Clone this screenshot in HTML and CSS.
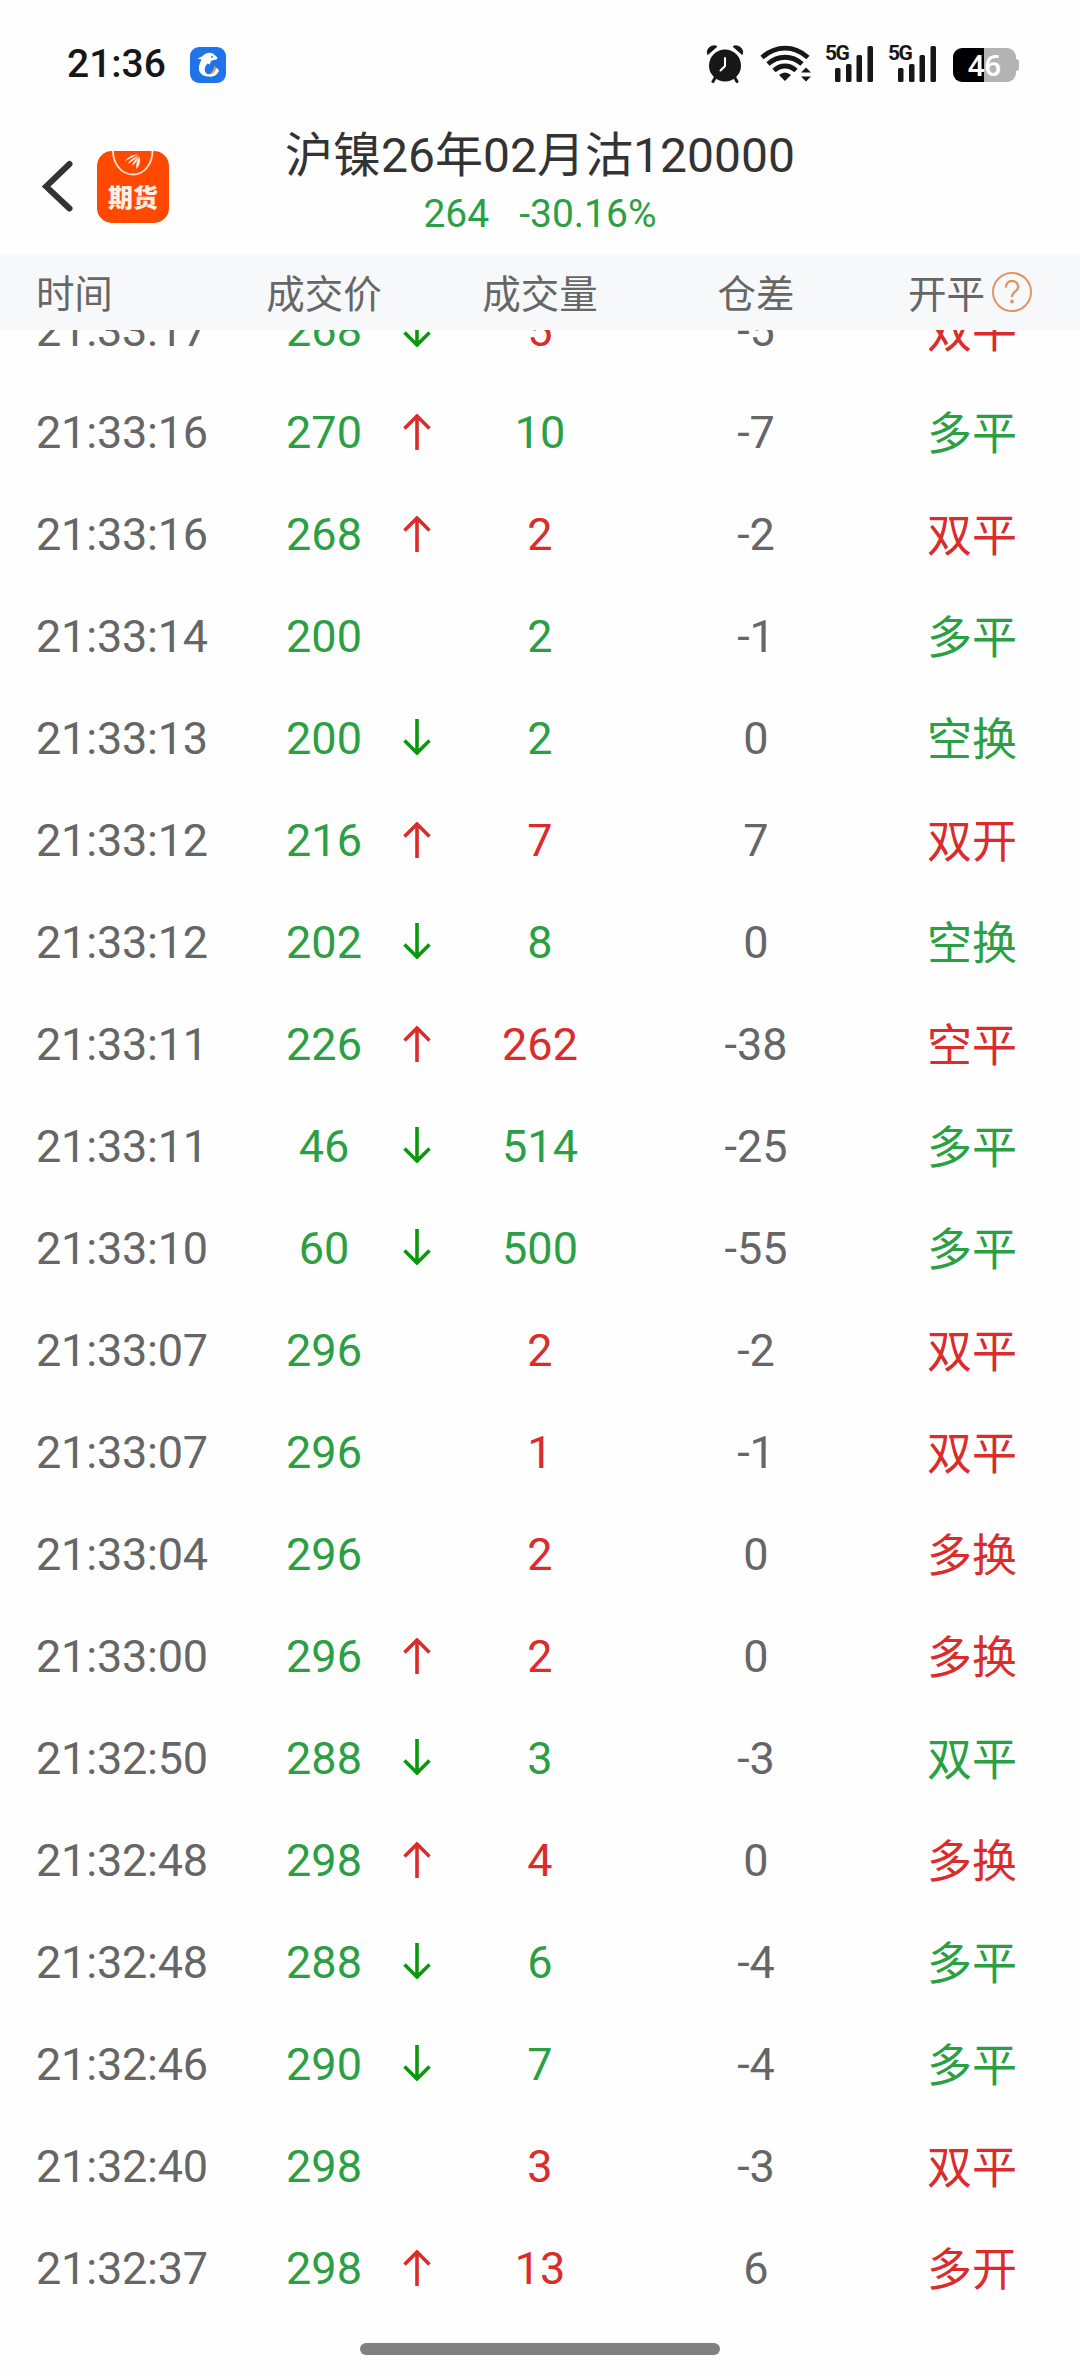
FILE: index.html
```html
<!DOCTYPE html>
<html lang="zh-CN">
<head>
  <meta charset="UTF-8">
  <meta name="viewport" content="width=device-width, initial-scale=1.0">
  <title>沪镍26年02月沽120000</title>
  <link rel="stylesheet" href="styles.css">
</head>
<body>
<div class="status-bar">
  <div class="status-left">
    <span class="clock">21:36</span>
    <svg class="app-badge" viewBox="0 0 36 36">
      <rect width="36" height="36" rx="9" fill="#1f74ea"/>
      <path d="M7.500 11.500 12 9.500C15 6 20 4.500 23.500 7L27.500 10.500 26.500 12.500 21.500 13.500 19.500 17.500 17.500 16.500C14 20 13.500 25 18 27.500L18.500 29.500C12 29.500 8 25 9 19.500 9.500 16 11 14 11.500 12.500Z" fill="#fff"/>
      <path d="M17 27.200C22 27.500 25.500 25 26 20.500L29 23C28 28 23 30.500 18.500 29.500Z" fill="#fff"/>
      <path d="M24 18.500C26.500 20 27 23.500 22.500 26.800L21 25.500C23.500 23.500 24.500 21.500 24 18.500Z" fill="#f7a14a"/>
      <circle cx="22" cy="10" r=".9" fill="#1f74ea"/>
    </svg>
  </div>
  <div class="status-right">
    <svg class="alarm" viewBox="0 0 38 38">
      <circle cx="19" cy="20.500" r="16" fill="#171717"/>
      <path d="M1.800 9.500C-.5 4 6 -1 11 1.500ZM36.200 9.500C38.500 4 32 -1 27 1.500Z" fill="#171717" stroke="#171717" stroke-linejoin="round"/>
      <path d="M9 33 7 36.500M29 33l2 3.500" stroke="#171717" stroke-width="3" stroke-linecap="round"/>
      <path d="M19 13v8l-4.500 4.500" fill="none" stroke="#fff" stroke-width="2" stroke-linecap="round"/>
    </svg>
    <svg class="wifi" viewBox="0 0 52 38">
      <g fill="none" stroke="#171717" stroke-width="4.800">
        <path d="M2 12.500C16 0 34 0 48 12.500"/>
        <path d="M8 19C18 10 32 10 42 19"/>
        <path d="M14 25.500C20.500 19.500 29.500 19.500 36 25.500"/>
      </g>
      <path d="M19 30Q25 25 31 30L25 36Z" fill="#171717"/>
      <path d="M41 27.500 46 22.500 51 27.500ZM41 31.500 46 36.500 51 31.500Z" fill="#171717"/>
    </svg>
    <div class="signal">
      <span>5G</span>
      <svg viewBox="0 0 39 37" fill="#171717">
        <rect x="0" y="23" width="5.500" height="14" rx="1.500"/>
        <rect x="11" y="19" width="5.500" height="18" rx="1.500"/>
        <rect x="21.500" y="10" width="5.500" height="27" rx="1.500"/>
        <rect x="32.500" y="1" width="5.500" height="36" rx="1.500"/>
      </svg>
    </div>
    <div class="signal">
      <span>5G</span>
      <svg viewBox="0 0 39 37" fill="#171717">
        <rect x="0" y="23" width="5.500" height="14" rx="1.500"/>
        <rect x="11" y="19" width="5.500" height="18" rx="1.500"/>
        <rect x="21.500" y="10" width="5.500" height="27" rx="1.500"/>
        <rect x="32.500" y="1" width="5.500" height="36" rx="1.500"/>
      </svg>
    </div>
    <div class="battery">
      <div class="battery-body">46</div>
      <div class="battery-tip"></div>
    </div>
  </div>
</div>

<header class="nav">
  <div class="nav-left">
    <svg class="back" viewBox="0 0 32 52">
      <path d="M27.500 4 4 26.500 27.500 48.500" fill="none" stroke="#333" stroke-width="6" stroke-linecap="round"/>
    </svg>
    <div class="logo">
      <svg class="logo-mark" viewBox="0 0 42 25">
        <path d="M1 0C1 12 9 23.500 21 23.500S40.500 12 40.500 0" fill="none" stroke="#ffe3d5" stroke-width="1.800"/>
        <path d="M13 10C16 6 21 3 26 3.500 22 5.500 18 7.500 13 10ZM15.500 13C18 9 22 6 27 4.500 23 8 20 11 15.500 13ZM20 15C21 11 24 7 27.500 5.500 25 9.500 24 12 20 15ZM24.500 18C23.500 13 25.500 8 28 6 28.500 11 27.500 15 24.500 18Z" fill="#ffeee6"/>
      </svg>
      <span>期货</span>
    </div>
  </div>
  <div class="nav-title">
    <h1>沪镍26年02月沽120000</h1>
    <p><span>264</span><span>-30.16%</span></p>
  </div>
</header>

<div class="row table-head">
  <div class="time">时间</div>
  <div>成交价</div>
  <div>成交量</div>
  <div>仓差</div>
  <div class="type-head">开平
    <svg class="help" viewBox="0 0 40 40">
      <circle cx="20" cy="20" r="19" fill="none" stroke="#e0946a" stroke-width="2"/>
      <path d="M13.800 15.500C13.800 11.500 16.500 9 20 9S26.200 11.500 26.200 15C26.200 19.500 20 19.500 20 25" fill="none" stroke="#e0946a" stroke-width="2.400"/>
      <circle cx="20" cy="29.500" r="1.900" fill="#e0946a"/>
    </svg>
  </div>
</div>

<div class="list-view">
  <div id="tick-list"></div>
</div>
<div class="home-bar"></div>

<script>
  // time, price, direction, volume, volume color, position change, type, type color
  const ticks = [
    ['21:33:17', 268, 'down', 5, 'red', -5, '双平', 'red'],
    ['21:33:16', 270, 'up', 10, 'green', -7, '多平', 'green'],
    ['21:33:16', 268, 'up', 2, 'red', -2, '双平', 'red'],
    ['21:33:14', 200, '', 2, 'green', -1, '多平', 'green'],
    ['21:33:13', 200, 'down', 2, 'green', 0, '空换', 'green'],
    ['21:33:12', 216, 'up', 7, 'red', 7, '双开', 'red'],
    ['21:33:12', 202, 'down', 8, 'green', 0, '空换', 'green'],
    ['21:33:11', 226, 'up', 262, 'red', -38, '空平', 'red'],
    ['21:33:11', 46, 'down', 514, 'green', -25, '多平', 'green'],
    ['21:33:10', 60, 'down', 500, 'green', -55, '多平', 'green'],
    ['21:33:07', 296, '', 2, 'red', -2, '双平', 'red'],
    ['21:33:07', 296, '', 1, 'red', -1, '双平', 'red'],
    ['21:33:04', 296, '', 2, 'red', 0, '多换', 'red'],
    ['21:33:00', 296, 'up', 2, 'red', 0, '多换', 'red'],
    ['21:32:50', 288, 'down', 3, 'green', -3, '双平', 'green'],
    ['21:32:48', 298, 'up', 4, 'red', 0, '多换', 'red'],
    ['21:32:48', 288, 'down', 6, 'green', -4, '多平', 'green'],
    ['21:32:46', 290, 'down', 7, 'green', -4, '多平', 'green'],
    ['21:32:40', 298, '', 3, 'red', -3, '双平', 'red'],
    ['21:32:37', 298, 'up', 13, 'red', 6, '多开', 'red']
  ];

  const arrows = {
    up: '<svg class="arrow red" viewBox="0 0 28 36"><path d="M14 36V2M1.500 14.500 14 2 26.500 14.500"/></svg>',
    down: '<svg class="arrow down" viewBox="0 0 28 36"><path d="M14 0V34M1.500 21.500 14 34 26.500 21.500"/></svg>',
    '': ''
  };

  document.getElementById('tick-list').innerHTML = ticks.map(t => `
    <div class="row">
      <div class="time">${t[0]}</div>
      <div class="price green"><span></span><span>${t[1]}</span><span class="dir">${arrows[t[2]]}</span></div>
      <div class="${t[4]}">${t[3]}</div>
      <div>${t[5]}</div>
      <div class="type ${t[7]}">${t[6]}</div>
    </div>
  `).join('');
</script>
</body>
</html>
```
FILE: styles.css
```css
* {
  box-sizing: border-box;
}

body {
  margin: 0;
  height: 2376px;
  display: flex;
  flex-direction: column;
  overflow: hidden;
  background: #fefefe;
  color: #666;
  font-family: Roboto, "Noto Sans CJK SC", sans-serif;
}

.status-bar {
  height: 128px;
  padding: 0 61px 0 67px;
  display: flex;
  justify-content: space-between;
}

.status-left {
  height: 128px;
  display: flex;
  gap: 24px;
}

.clock {
  height: 46px;
  margin-top: 41px;
  font-size: 39px;
  line-height: 46px;
  font-weight: 500;
  color: #171717;
}

.app-badge {
  width: 36px;
  height: 36px;
  margin-top: 47px;
}

.status-right {
  display: flex;
  align-items: flex-start;
  padding-top: 45px;
}

.alarm {
  width: 38px;
  height: 38px;
  margin-right: 16px;
}

.wifi {
  width: 52px;
  height: 38px;
  margin-right: 13px;
}

.signal {
  width: 63px;
  height: 37px;
  display: grid;
}

.signal span,
.signal svg {
  grid-area: 1 / 1;
}

.signal span {
  font-size: 21px;
  line-height: 17px;
  font-weight: 700;
  letter-spacing: -1.5px;
  color: #171717;
}

.signal svg {
  width: 39px;
  height: 37px;
  margin-left: 10px;
}

.battery {
  display: flex;
  align-items: center;
  margin: 3px 0 0 2px;
}

.battery-body {
  width: 63px;
  height: 34px;
  border-radius: 9px;
  background: linear-gradient(to right, #000 31px, #b3b3b3 31px);
  color: #fff;
  font-family: "Noto Sans", sans-serif;
  font-size: 29px;
  font-weight: 600;
  line-height: 34px;
  text-align: center;
}

.battery-tip {
  width: 3px;
  height: 12px;
  border-radius: 0 3px 3px 0;
  background: #b3b3b3;
}

.nav {
  height: 127px;
  display: grid;
  grid-template-columns: 216px 1fr 216px;
}

.nav-left {
  display: flex;
  align-items: flex-start;
  padding: 23px 0 0 42px;
}

.back {
  width: 32px;
  height: 52px;
  margin-top: 9px;
}

.logo {
  width: 72px;
  height: 72px;
  margin-left: 23px;
  border-radius: 15px;
  background: #ff4800;
  display: flex;
  flex-direction: column;
  align-items: center;
}

.logo-mark {
  width: 42px;
  height: 25px;
}

.logo span {
  margin-top: 9px;
  font-size: 25px;
  line-height: 28px;
  font-weight: 900;
  color: #ffeee6;
}

.nav-title {
  padding-top: 2px;
  text-align: center;
}

.nav-title h1 {
  margin: 0;
  font-size: 48px;
  line-height: 52px;
  font-weight: 400;
  color: #333;
  white-space: nowrap;
}

.nav-title p {
  margin: 8px 0 0;
  display: flex;
  justify-content: center;
  gap: 30px;
  font-size: 39px;
  line-height: 48px;
  color: #2b9f43;
}

.row {
  height: 102px;
  display: grid;
  grid-template-columns: repeat(5, 216px);
  align-items: center;
  font-size: 45px;
  line-height: 60px;
  text-align: center;
}

.row > div {
  padding-top: 2px;
}

.row .time {
  padding-left: 36px;
  text-align: left;
  letter-spacing: -0.2px;
}

.row .type {
  padding-top: 5px;
}

.table-head {
  height: 75px;
  flex-shrink: 0;
  background: #f7f8fa;
  font-size: 38.5px;
}

.table-head > div {
  padding-top: 4px;
}

.type-head {
  display: flex;
  align-items: center;
  justify-content: center;
  gap: 7px;
  padding-right: 4px;
}

.help {
  width: 40px;
  height: 40px;
  margin-top: -6px;
}

.list-view {
  height: 1989px;
  overflow: hidden;
  display: flex;
  flex-direction: column;
  justify-content: flex-end;
}

.price {
  display: grid;
  grid-template-columns: 1fr 120px 1fr;
  align-items: center;
}

.dir {
  display: flex;
  justify-content: flex-end;
}

.arrow {
  width: 28px;
  height: 36px;
  margin: -2px 1px 0 0;
  fill: none;
  stroke: currentColor;
  stroke-width: 3.6;
}

.red {
  color: #dc2b2b;
}

.green {
  color: #2b9f43;
}

.down {
  margin-top: -5px;
  color: #0c980c;
}

.home-bar {
  width: 360px;
  height: 12px;
  margin: 24px auto 0;
  border-radius: 6px;
  background: #808080;
}
```
